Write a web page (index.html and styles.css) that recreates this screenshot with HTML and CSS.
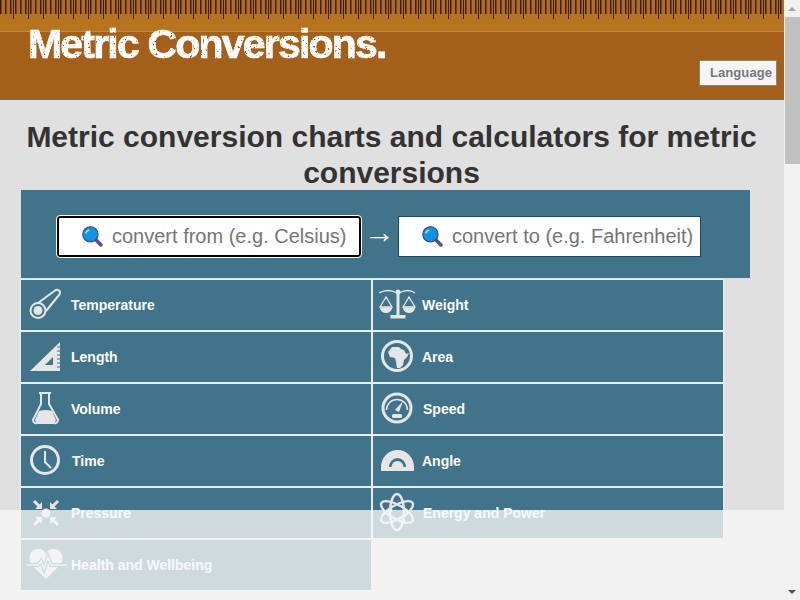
FILE: index.html
```html
<!DOCTYPE html>
<html>
  <head>
    <title>Metric Conversions</title>
    <link rel="stylesheet" href="styles.css">
  </head>
  <body>
    <svg class="defs" width="0" height="0">
      <filter id="distress" x="0" y="0" width="100%" height="100%">
        <feTurbulence type="fractalNoise" baseFrequency="0.4" numOctaves="2" seed="4" result="noise"/>
        <feColorMatrix in="noise" type="matrix" values="0 0 0 0 1  0 0 0 0 1  0 0 0 0 1  0 0 0 -9 6.9" result="speck"/>
        <feComposite in="SourceGraphic" in2="speck" operator="in"/>
      </filter>
    </svg>
    <div class="page">
      <div class="header">
        <div class="ruler"></div>
        <div class="header-main">
          <div class="logo">Metric Conversions.</div>
          <button class="lang">Language</button>
        </div>
      </div>
      <div class="content">
        <h1>Metric conversion charts and calculators for metric conversions</h1>
        <div class="search">
          <div class="field focus">
            <svg class="lens" viewBox="0 0 20 20"><path d="M12 12l6 6" stroke="#5d4a8f" stroke-width="3.4" stroke-linecap="round"/><circle cx="8" cy="8" r="7.2" fill="#0f95e6" stroke="#3c4c8c" stroke-width="1.200"/><path d="M3.600 7a4.600 4.600 0 0 1 3-3.200" stroke="#b8e3fb" stroke-width="1.600" fill="none"/></svg>
            <span>convert from (e.g. Celsius)</span>
          </div>
          <div class="arrow">&rarr;</div>
          <div class="field">
            <svg class="lens" viewBox="0 0 20 20"><path d="M12 12l6 6" stroke="#5d4a8f" stroke-width="3.4" stroke-linecap="round"/><circle cx="8" cy="8" r="7.2" fill="#0f95e6" stroke="#3c4c8c" stroke-width="1.200"/><path d="M3.600 7a4.600 4.600 0 0 1 3-3.200" stroke="#b8e3fb" stroke-width="1.600" fill="none"/></svg>
            <span>convert to (e.g. Fahrenheit)</span>
          </div>
        </div>
        <div class="tiles">
          <a class="tile">
            <svg class="icon" viewBox="0 0 36 36"><path d="M10 16L27 3.500a3 3 0 0 1 4 4.500L18 24" fill="none" stroke="#e6e6e6" stroke-width="2"/><circle cx="10" cy="23.500" r="7.500" fill="#41748a" stroke="#e6e6e6" stroke-width="2"/><circle cx="10" cy="23.500" r="4.500" fill="#e6e6e6"/></svg>
            <span class="t1">Temperature</span>
          </a>
          <a class="tile">
            <svg class="icon" viewBox="0 0 36 36"><g fill="none" stroke="#e6e6e6" stroke-width="1.300"><path d="M-1 6Q8 1 17 6M19 6Q28 1 35 6"/><path d="M6 10L0 20h12zM29 10l-6 10h12z"/></g><path d="M0 20.500h12a6 5.500 0 0 1-12 0zM23 20.500h12a6 5.500 0 0 1-12 0z" fill="#e6e6e6"/><path d="M16.500 5h3v23h6v3.500h-15v-3.500h6z" fill="#e6e6e6"/><circle cx="18" cy="5" r="2.500" fill="#e6e6e6"/></svg>
            <span class="t2">Weight</span>
          </a>
          <a class="tile">
            <svg class="icon" viewBox="0 0 36 36"><path fill-rule="evenodd" d="M2 32L32 3v29zM17 26h8v-8z" fill="#e6e6e6"/><path d="M29 8h3M29 12h3M29 16h3M29 20h3M29 24h3M29 28h3" stroke="#41748a"/></svg>
            <span class="t3">Length</span>
          </a>
          <a class="tile">
            <svg class="icon" viewBox="0 0 36 36"><circle cx="17" cy="17" r="14.500" fill="none" stroke="#e6e6e6" stroke-width="3"/><path d="M8 13l4-5 7 0 2 2 3 1 2 4 3-1-2 4-3 3-1 5-3 3-3 0-1-6-1-4-5-1z" fill="#e6e6e6"/><path d="M15 6h7" stroke="#41748a" stroke-width="1.500"/></svg>
            <span class="t4">Area</span>
          </a>
          <a class="tile">
            <svg class="icon" viewBox="0 0 36 36"><path d="M11 2h12M13 2v11L6 27a3 3 0 0 0 3 5h17a3 3 0 0 0 3-5l-8-14V2" fill="none" stroke="#e6e6e6" stroke-width="2"/><path d="M11 20q7-2 13 0l4 9a2 2 0 0 1-2 2H9a2 2 0 0 1-2-2z" fill="#e6e6e6"/></svg>
            <span class="t3">Volume</span>
          </a>
          <a class="tile">
            <svg class="icon" viewBox="0 0 36 36"><circle cx="17" cy="17" r="14" fill="none" stroke="#e6e6e6" stroke-width="3"/><path d="M6.500 19a10.500 10.500 0 1 1 21 0" fill="none" stroke="#e6e6e6" stroke-width="1.500"/><path d="M15 19L23 10l-4 11z" fill="#e6e6e6"/><rect x="12" y="23" width="10" height="4" rx="1.500" fill="#e6e6e6"/></svg>
            <span class="t5">Speed</span>
          </a>
          <a class="tile">
            <svg class="icon" viewBox="0 0 36 36"><circle cx="17" cy="17" r="13.500" fill="none" stroke="#e6e6e6" stroke-width="3"/><path d="M17 8v11l6 6" fill="none" stroke="#e6e6e6" stroke-width="2"/></svg>
            <span class="t6">Time</span>
          </a>
          <a class="tile">
            <svg class="icon" viewBox="0 0 36 36"><path fill-rule="evenodd" d="M1 28v-4a16.500 17 0 0 1 33 0v4zM9 24h17a8.500 9 0 0 0-17 0z" fill="#e6e6e6"/><path d="M11.500 24a6 6 0 0 1 12 0z" fill="#e6e6e6"/></svg>
            <span class="t2">Angle</span>
          </a>
          <a class="tile">
            <svg class="icon" viewBox="0 0 36 36"><circle cx="18" cy="18" r="4.500" fill="#e6e6e6"/><g stroke="#e6e6e6" stroke-width="3"><path d="M6 6l5 5M30 6l-5 5M6 30l5-5M30 30l-5-5"/></g><path d="M14 14H7l7-7zM22 14h7l-7-7zM14 22H7l7 7zM22 22h7l-7 7z" fill="#e6e6e6"/></svg>
            <span class="t3">Pressure</span>
          </a>
          <a class="tile">
            <svg class="icon" viewBox="0 0 36 36"><g fill="none" stroke="#e6e6e6" stroke-width="2.400"><ellipse cx="17" cy="17" rx="18" ry="7" transform="rotate(90 17 17)"/><ellipse cx="17" cy="17" rx="18" ry="7" transform="rotate(30 17 17)"/><ellipse cx="17" cy="17" rx="18" ry="7" transform="rotate(-30 17 17)"/></g><circle cx="10" cy="15" r="2.500" fill="#e6e6e6"/><circle cx="23" cy="27" r="2.500" fill="#e6e6e6"/></svg>
            <span class="t7">Energy and Power</span>
          </a>
          <a class="tile">
            <svg class="icon" viewBox="0 0 36 36"><path d="M18 32L3 17C-1 10 3 2 10 2c4 0 7 2 8 5 1-3 4-5 8-5 7 0 11 8 7 15z" fill="#e6e6e6"/><path d="M-1 18h11l3-4 3 8 4-12 3 8h16" fill="none" stroke="#41748a" stroke-width="4"/><path d="M-1 18h11l3-4 3 8 4-12 3 8h16" fill="none" stroke="#e6e6e6" stroke-width="1.500"/></svg>
            <span class="t3">Health and Wellbeing</span>
          </a>
        </div>
      </div>
    </div>
    <div class="fade"></div>
    <div class="scrollbar">
      <div class="sb-btn"><i class="up"></i></div>
      <div class="sb-track"><div class="sb-thumb"></div></div>
      <div class="sb-btn"><i class="down"></i></div>
    </div>
  </body>
</html>
```

FILE: styles.css
```css
html, body {
  margin: 0;
  height: 100%;
  overflow: hidden;
}
body {
  display: flex;
  font-family: "Liberation Sans", Arial, sans-serif;
  background: #f1f1f1;
}
.defs {
  position: absolute;
}
.page {
  width: 784px;
  height: 600px;
  display: flex;
  flex-direction: column;
  background: #e0e0e0;
}

/* header */
.header {
  height: 100px;
  background: #a45f1a;
  flex: none;
}
.ruler {
  height: 32px;
  box-sizing: border-box;
  border-bottom: 1px solid #c68a3c;
  background-color: #b8731f;
  background-image:
    repeating-linear-gradient(90deg, transparent 0, transparent 13px, #3a1c0a 13px, #3a1c0a 14px, transparent 14px, transparent 15px),
    repeating-linear-gradient(90deg, #3f1f0c 0, #3f1f0c 1px, #74461c 1px, #74461c 2px, #b06c22 2px, #b06c22 5px);
  background-size: 100% 19px, 100% 14px;
  background-repeat: no-repeat;
}
.header-main {
  height: 68px;
  box-sizing: border-box;
  display: flex;
  justify-content: space-between;
  align-items: flex-end;
  padding: 0 7px 14px 28px;
}
.logo {
  align-self: flex-start;
  margin-top: -11px;
  font-size: 41px;
  font-weight: bold;
  line-height: 46px;
  letter-spacing: -1.8px;
  color: #fff;
  -webkit-text-stroke: 0.7px #fff;
  filter: url(#distress);
}
.lang {
  width: 78px;
  height: 26px;
  padding: 0 0 1px 6px;
  background: #f5f5f5;
  border: 1px solid #8f8577;
  color: #77777b;
  font-family: inherit;
  font-size: 13px;
  font-weight: bold;
  letter-spacing: 0.1px;
  text-align: center;
}

/* main */
.content {
  padding: 0 21px;
}
h1 {
  margin: 19px 0 0;
  width: 741px;
  font-size: 30px;
  line-height: 36px;
  font-weight: bold;
  text-align: center;
  color: #333;
}
.search {
  width: 729px;
  height: 88px;
  margin-top: -1px;
  background: #41748a;
  display: flex;
  align-items: center;
  padding: 4px 0 0 36px;
  box-sizing: border-box;
}
.field {
  width: 303px;
  height: 41px;
  box-sizing: border-box;
  background: #fff;
  border: 1px solid #1b4a63;
  display: flex;
  align-items: center;
  padding: 1px 0 0 23px;
  font-size: 20px;
  color: #757575;
  white-space: nowrap;
}
.field.focus {
  width: 304px;
  border: 2px solid #000;
  border-radius: 3px;
  outline: 1px solid #fff;
}
.lens {
  width: 21px;
  height: 21px;
  margin-right: 9px;
  flex: none;
}
.arrow {
  width: 37px;
  margin-top: -7px;
  text-align: center;
  color: #fff;
  font-size: 31px;
  font-weight: normal;
}
.tiles {
  display: grid;
  grid-template-columns: 350px 350px;
  grid-auto-rows: 50px;
  gap: 2px;
  margin-top: 2px;
}
.tile {
  display: flex;
  align-items: center;
  background: #41748a;
  outline: 1px solid #e6eef1;
  color: #fff;
  font-size: 14px;
  font-weight: bold;
  padding-left: 7px;
}
.icon {
  width: 36px;
  height: 36px;
  flex: none;
  overflow: visible;
}
.t1 { margin-left: 7px; }
.t2 { margin-left: 6px; }
.t3 { margin-left: 7px; }
.t4 { margin-left: 6px; }
.t5 { margin-left: 7px; }
.t6 { margin-left: 8px; }
.t7 { margin-left: 7px; }

/* bottom bar over the page */
.fade {
  position: fixed;
  left: 0;
  bottom: 0;
  width: 784px;
  height: 90px;
  background: rgba(246, 246, 246, 0.79);
}

/* scrollbar */
.scrollbar {
  position: fixed;
  top: 0;
  right: 0;
  bottom: 0;
  width: 16px;
  display: flex;
  flex-direction: column;
  background: #f1f1f1;
}
.sb-btn {
  height: 17px;
  display: flex;
  align-items: center;
  justify-content: center;
}
.sb-btn i {
  border-left: 4px solid transparent;
  border-right: 4px solid transparent;
}
.up {
  border-bottom: 4px solid #a3a3a3;
}
.down {
  border-top: 4px solid #505050;
}
.sb-track {
  flex: 1;
}
.sb-thumb {
  height: 147px;
  background: #c1c1c1;
  margin-left: 1px;
}
```
